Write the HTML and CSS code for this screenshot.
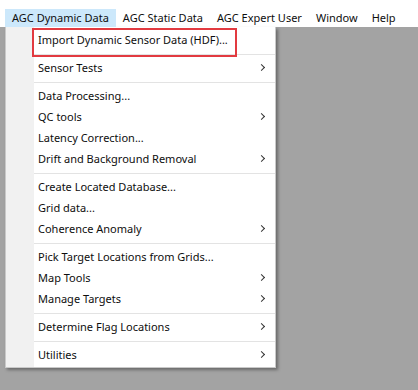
FILE: index.html
```html
<!DOCTYPE html>
<html lang="en">
<head>
<meta charset="utf-8">
<title>AGC Dynamic Data menu</title>
<link rel="stylesheet" href="styles.css">
</head>
<body>
<div id="menubar">
 <span class="top active">AGC Dynamic Data</span>
 <span class="top">AGC Static Data</span>
 <span class="top">AGC Expert User</span>
 <span class="top">Window</span>
 <span class="top">Help</span>
</div>

<div id="stage">
 <div id="menu">
  <div class="item marked">Import Dynamic Sensor Data (HDF)...</div>
  <div class="sep"></div>
  <div class="item sub">Sensor Tests</div>
  <div class="sep"></div>
  <div class="item">Data Processing...</div>
  <div class="item sub">QC tools</div>
  <div class="item">Latency Correction...</div>
  <div class="item sub">Drift and Background Removal</div>
  <div class="sep"></div>
  <div class="item">Create Located Database...</div>
  <div class="item">Grid data...</div>
  <div class="item sub">Coherence Anomaly</div>
  <div class="sep"></div>
  <div class="item">Pick Target Locations from Grids...</div>
  <div class="item sub">Map Tools</div>
  <div class="item sub">Manage Targets</div>
  <div class="sep"></div>
  <div class="item sub">Determine Flag Locations</div>
  <div class="sep"></div>
  <div class="item sub">Utilities</div>
 </div>
</div>
</body>
</html>
```

FILE: styles.css
```css
html,body{margin:0;padding:0;height:100%;}
body{font-family:"Noto Sans","Open Sans",sans-serif;font-size:11px;color:#0e0e0e;background-color:#a3a3a3;}

#menubar{display:flex;align-items:flex-end;height:27px;padding-left:5px;background-color:#ffffff;}
#menubar .top{flex-shrink:0;white-space:nowrap;height:18px;line-height:17px;padding:0 7px 0 7px;}
#menubar .top.active{background-color:#cce8fb;}

#stage{padding-left:5px;}
#menu{width:269px;padding:3px 0 1px 0;background:linear-gradient(to right,#f1f1f1 28px,#ffffff 28px);border:1px solid #c9c9c9;border-top:none;box-shadow:2px 2px 3px rgba(0,0,0,0.35);}
#menu .item{position:relative;height:21px;line-height:20px;margin-left:28px;padding-left:4px;white-space:nowrap;}
#menu .item.sub::after{content:"";position:absolute;right:11px;top:7px;width:4px;height:4px;border-right:1.3px solid #333;border-top:1.3px solid #333;transform:rotate(45deg);}
#menu .item.marked::before{content:"";position:absolute;left:-2px;top:-2px;width:205px;height:29px;box-sizing:border-box;border:2px solid #e23a40;}
#menu .sep{height:1px;margin:3px 0 3px 28px;background-color:#e3e3e3;}
```
